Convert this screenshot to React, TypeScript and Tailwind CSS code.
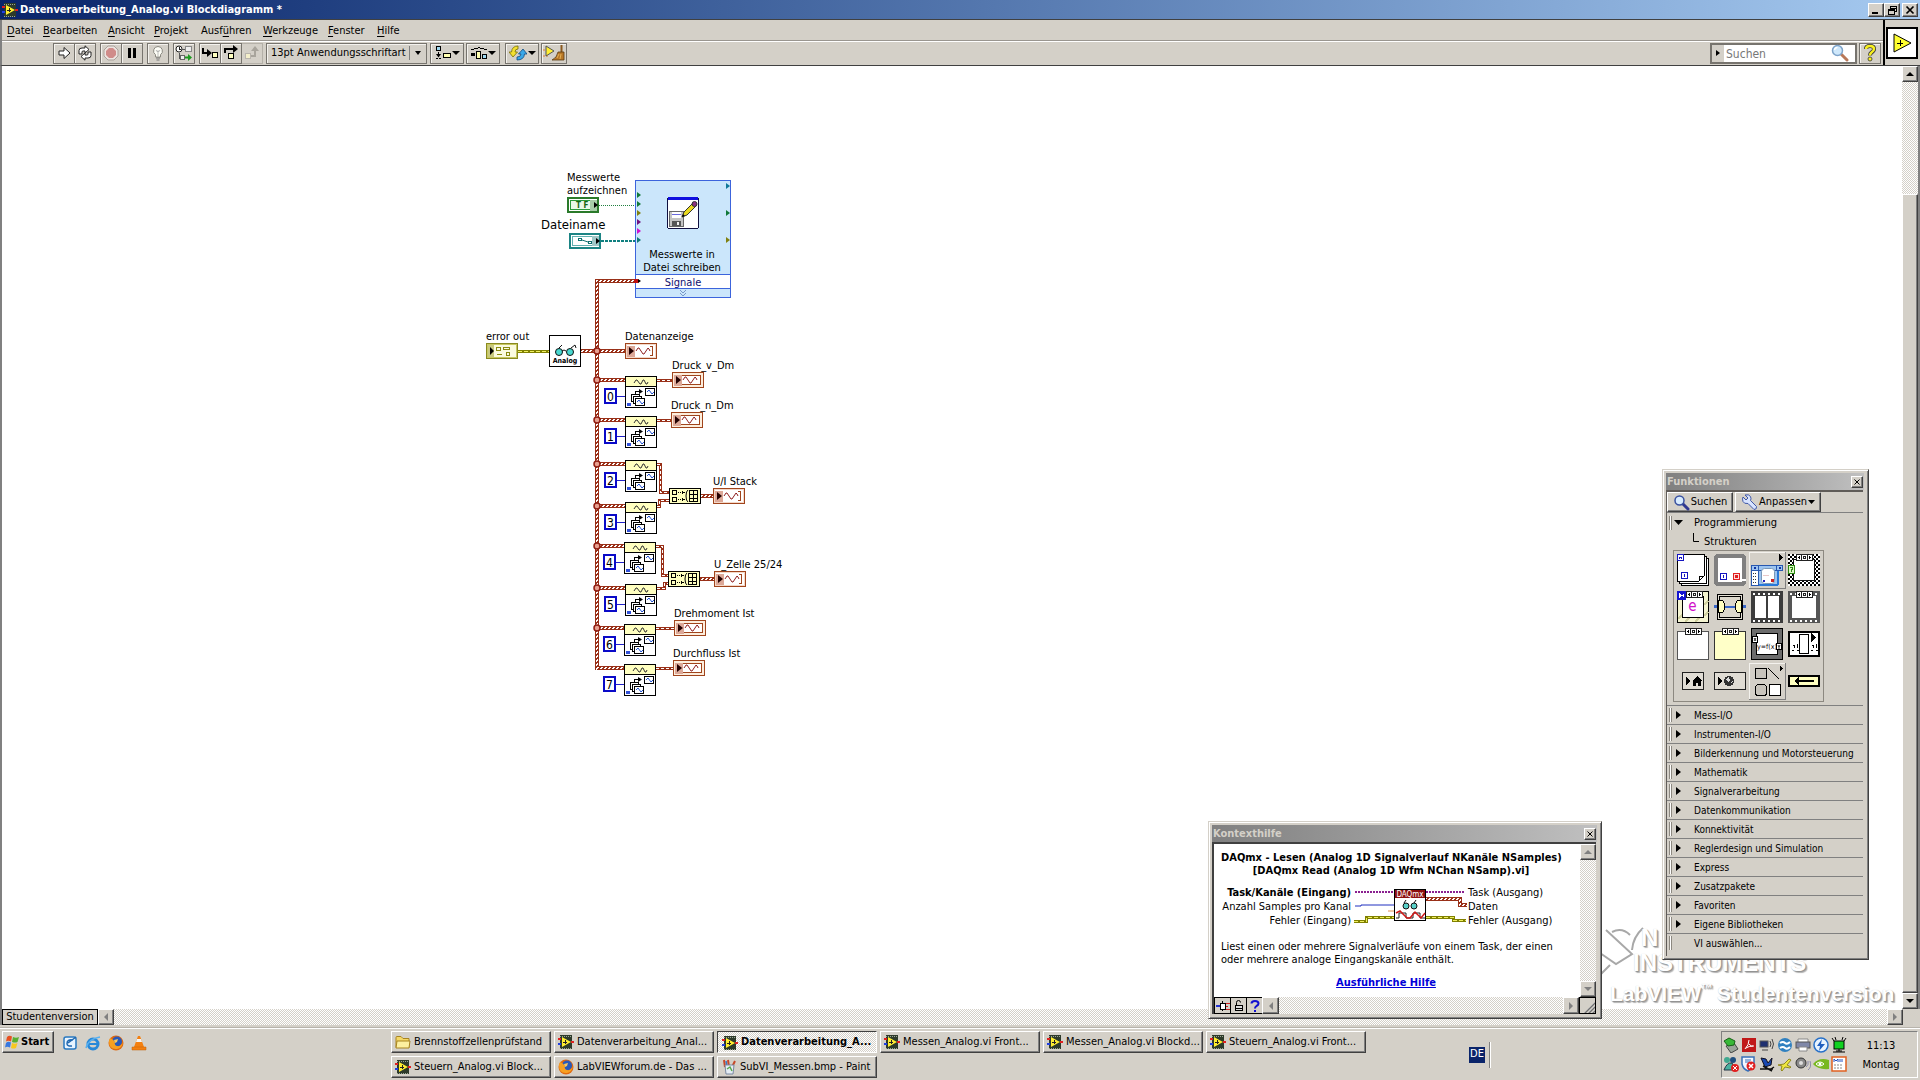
import React from "react";

type P = { children?: React.ReactNode; className?: string };

const RAISED =
  "border border-t-white border-l-white border-r-[#404040] border-b-[#404040] shadow-[inset_-1px_-1px_0_#808080] bg-[#d4d0c8]";
const DITHER =
  "bg-[repeating-conic-gradient(#ffffff_0_25%,#d4d0c8_0_50%)] bg-[length:2px_2px]";

/* ---------- small glyphs ---------- */

function ViIcon() {
  return (
    <svg width="16" height="16" viewBox="0 0 16 16" className="shrink-0" shapeRendering="crispEdges">
      <rect x="2" y="1" width="12" height="14" fill="#2d3a2a" />
      <path d="M2 2h12M2 14h12" stroke="#9aa694" strokeWidth="1" strokeDasharray="1 1" />
      <path d="M0 5h3" stroke="#e02020" strokeWidth="2" />
      <path d="M0 10h3" stroke="#2040e0" strokeWidth="2" />
      <path d="M13 8h3" stroke="#e02020" strokeWidth="2" />
      <path d="M4 3L13 8L4 13z" fill="#ffee30" shapeRendering="auto" />
      <path d="M5 8h4M7 6v4" stroke="#222" />
    </svg>
  );
}

function Arrow({ dir, color = "#000" }: { dir: "up" | "down" | "left" | "right"; color?: string }) {
  const d = {
    up: "M4 2l4 4H0z",
    down: "M0 2h8L4 6z",
    left: "M6 0v8L2 4z",
    right: "M2 0v8l4-4z",
  }[dir];
  return (
    <svg width="8" height="8" viewBox="0 0 8 8" className="shrink-0">
      <path d={d} fill={color} />
    </svg>
  );
}

function ScrollButton({ dir, color, className = "" }: { dir: "up" | "down" | "left" | "right"; color?: string; className?: string }) {
  return (
    <button aria-label={"Bildlauf " + dir} className={`flex items-center justify-center shrink-0 ${RAISED} ${className}`}>
      <Arrow dir={dir} color={color} />
    </button>
  );
}

function Magnifier() {
  return (
    <svg width="18" height="18" viewBox="0 0 18 18" className="shrink-0">
      <path d="M10.500 10.500L16 16" stroke="#b87858" strokeWidth="3" strokeLinecap="round" />
      <circle cx="6.500" cy="6.500" r="5" fill="#cfe8fb" stroke="#7da3c9" strokeWidth="1.500" />
      <path d="M3.500 6a3 3 0 0 1 3-2.500" stroke="#fff" strokeWidth="1.500" fill="none" />
    </svg>
  );
}

/* ---------- title bar, menu, toolbar ---------- */

function TitleBar() {
  const b = `flex h-3.5 items-center justify-center ${RAISED}`;
  return (
    <header className="flex h-5 shrink-0 items-center border-b border-[#404040] bg-gradient-to-r from-[#0a246a] to-[#a6caf0] pl-0.5 pr-0.5">
      <ViIcon />
      <h1 className="ml-0.5 flex-1 whitespace-nowrap font-bold leading-4 text-white">
        Datenverarbeitung_Analog.vi Blockdiagramm *
      </h1>
      <button aria-label="Minimieren" className={`${b} w-4`}>
        <svg width="10" height="10"><path d="M1 8h6" stroke="#000" strokeWidth="2" /></svg>
      </button>
      <button aria-label="Wiederherstellen" className={`${b} w-4`}>
        <svg width="10" height="10" shapeRendering="crispEdges">
          <path d="M3 1h6v2H3zM3 2v2M9 2v4H7" stroke="#000" fill="none" />
          <path d="M1 4h6v5H1zM1 5h6" stroke="#000" fill="none" />
        </svg>
      </button>
      <button aria-label="Schließen" className={`${b} ml-0.5 w-4`}>
        <svg width="10" height="10"><path d="M1.500 1.500l7 7M8.500 1.500l-7 7" stroke="#000" strokeWidth="1.700" /></svg>
      </button>
    </header>
  );
}

const MENUS: [string, string, string, string][] = [
  ["", "D", "atei", "w-9"],
  ["", "B", "earbeiten", "w-[65px]"],
  ["", "A", "nsicht", "w-[46px]"],
  ["", "P", "rojekt", "w-[47px]"],
  ["Ausf", "ü", "hren", "w-[62px]"],
  ["", "W", "erkzeuge", "w-[65px]"],
  ["", "F", "enster", "w-[49px]"],
  ["", "H", "ilfe", "w-8"],
];

function MenuBar() {
  return (
    <nav className="flex h-[21px] items-center border-b border-[#9a9690] pl-[5px] pt-0.5">
      {MENUS.map(([a, u, c, w]) => (
        <button key={u + c} className={`${w} whitespace-nowrap text-left leading-4`}>
          {a}
          <span className="underline underline-offset-2">{u}</span>
          {c}
        </button>
      ))}
    </nav>
  );
}

function Tool({ label, className = "", children }: P & { label: string }) {
  return (
    <button
      aria-label={label}
      className={`flex h-[21px] shrink-0 items-center justify-center border border-[#77746e] bg-[#d4d0c8] shadow-[inset_1px_1px_0_#f4f2ee] ${className}`}
    >
      {children}
    </button>
  );
}

function Toolbar() {
  return (
    <div className="flex h-[25px] items-center border-t border-white pl-[51px] pr-0.5">
      <Tool label="Ausführen" className="w-[22px]">
        <svg width="16" height="16"><path d="M3 6h5V2.500L14 8l-6 5.500V10H3z" fill="#fff" stroke="#222" /></svg>
      </Tool>
      <Tool label="Wiederholt ausführen" className="-ml-px w-[22px]">
        <svg width="16" height="16">
          <path d="M2 9V5.500q0-2.500 3-2.500h3V.800l4 3.700L8 8V6H6q-1 0-1 1v2z" fill="#fff" stroke="#222" />
          <path d="M14 7v3.500q0 2.500-3 2.500H8v2.200l-4-3.700L8 8v2h2q1 0 1-1V7z" fill="#fff" stroke="#222" />
        </svg>
      </Tool>
      <Tool label="Abbrechen" className="ml-1 w-[22px]">
        <svg width="16" height="16">
          <path d="M5 1h6l4 4v6l-4 4H5l-4-4V5z" fill="#ece4e0" stroke="#aaa29c" />
          <path d="M6 3h4l3 3v4l-3 3H6l-3-3V6z" fill="#d08c8a" />
        </svg>
      </Tool>
      <Tool label="Pause" className="-ml-px w-[22px]">
        <svg width="16" height="16"><path d="M4 3h3v10H4zM9 3h3v10H9z" /></svg>
      </Tool>
      <Tool label="Highlight-Funktion" className="ml-1 w-[22px]">
        <svg width="16" height="16">
          <path d="M8 1.500a4.500 4.500 0 0 0-2.500 8.200V12h5V9.700A4.500 4.500 0 0 0 8 1.500z" fill="#fdfdf6" stroke="#8a8880" />
          <path d="M6 5l1.500 2L8 5.500l.5 1.500L10 5M8 7v4" stroke="#aaa" fill="none" strokeWidth=".8" />
          <path d="M6 13h4M6.500 15h3" stroke="#777" />
        </svg>
      </Tool>
      <Tool label="Verbindungswerte beibehalten" className="ml-1 w-[22px]">
        <svg width="18" height="16" shapeRendering="crispEdges">
          <circle cx="4" cy="4" r="3" fill="#fff" stroke="#222" shapeRendering="auto" />
          <path d="M4 2v2h2" stroke="#222" fill="none" />
          <path d="M7 4h3M4 8v5h3" stroke="#555" fill="none" />
          <rect x="10" y="1" width="6" height="5" fill="#eee" stroke="#888" />
          <rect x="5" y="10" width="4" height="4" fill="#eee" stroke="#666" />
          <path d="M10 11.500h3V9l4 3.500-4 3.500v-2.500h-3z" fill="#1c9a20" shapeRendering="auto" />
        </svg>
      </Tool>
      <Tool label="Hineinspringen" className="ml-1 w-[22px]">
        <svg width="18" height="16" shapeRendering="crispEdges">
          <path d="M2 3v5h4" stroke="#000" strokeWidth="2" fill="none" />
          <path d="M6 4l5 4-5 4z" shapeRendering="auto" />
          <rect x="11.500" y="7.500" width="5" height="5" fill="#ffffc0" stroke="#000" />
        </svg>
      </Tool>
      <Tool label="Überspringen" className="-ml-px w-[22px]">
        <svg width="18" height="16" shapeRendering="crispEdges">
          <path d="M3 8V4h8" stroke="#000" strokeWidth="2" fill="none" />
          <path d="M11 0l5 4-5 4z" shapeRendering="auto" />
          <rect x="6.500" y="8.500" width="5" height="5" fill="#ffffc0" stroke="#000" />
        </svg>
      </Tool>
      <button aria-label="Herausspringen" className="flex h-[21px] w-[21px] shrink-0 items-center justify-center border-y border-r border-[#b4b0a8]">
        <svg width="18" height="16" shapeRendering="crispEdges">
          <path d="M8 11h4V6" stroke="#a8a49c" strokeWidth="2" fill="none" />
          <path d="M8 6l4-5 4 5z" fill="#a8a49c" shapeRendering="auto" />
          <rect x="2.500" y="8.500" width="5" height="5" fill="#f4efcb" stroke="#b8b4ac" />
        </svg>
      </button>
      <label className="relative ml-[3px] flex h-[21px] w-[161px] shrink-0 items-center border border-[#77746e] shadow-[inset_1px_1px_0_#f4f2ee]">
        <select aria-label="Schriftart" className="h-full w-full appearance-none bg-transparent pl-1 outline-none">
          <option>13pt Anwendungsschriftart</option>
        </select>
        <span className="pointer-events-none absolute right-0 flex h-3.5 w-[17px] items-center justify-center border-l border-[#808080]">
          <svg width="8" height="8"><path d="M1 2h6L4 6z" /></svg>
        </span>
      </label>
      <Tool label="Objekte ausrichten" className="ml-[3px] w-[34px]">
        <svg width="18" height="16" shapeRendering="crispEdges">
          <rect x="2.500" y="1.500" width="4" height="4" fill="#9fd8f0" stroke="#000" />
          <path d="M4.500 7v3M2 13.500h6" stroke="#000" strokeDasharray="2 1" />
          <path d="M2 9h5l-2.500 3.500z" shapeRendering="auto" />
          <rect x="9.500" y="8.500" width="7" height="4" fill="#ffffb0" stroke="#000" />
        </svg>
        <Arrow dir="down" />
      </Tool>
      <Tool label="Objekte einteilen" className="ml-0.5 w-[34px]">
        <svg width="18" height="16" shapeRendering="crispEdges">
          <path d="M1 4.500h3M4 3.500h4M8 2.500h2M10 3.500h4M14 4.500h3" stroke="#000" />
          <path d="M1 8h4v3H1z" />
          <rect x="6.500" y="6.500" width="4" height="7" fill="#ffffb0" stroke="#000" />
          <rect x="12.500" y="9.500" width="4" height="4" fill="#9fd8f0" stroke="#000" />
        </svg>
        <Arrow dir="down" />
      </Tool>
      <Tool label="Neu ordnen" className="ml-[5px] w-[34px] gap-px">
        <svg width="18" height="16">
          <path d="M9 1Q3 1 2.500 7H0l4 5 4.500-5H6Q6 4 9 4z" fill="#f4e030" stroke="#7a7000" strokeWidth=".8" />
          <path d="M8 15q7 0 7.500-6H18l-4-5-4.500 5H12q0 3-4 3z" fill="#3aa8e8" stroke="#104a80" strokeWidth=".8" />
        </svg>
        <Arrow dir="down" />
      </Tool>
      <Tool label="Diagramm aufräumen" className="ml-0.5 w-[26px]">
        <svg width="22" height="16" className="shrink-0">
          <path d="M0 5h5M0 11h5" stroke="#e08030" strokeDasharray="2 1" />
          <path d="M3 1l8 5-8 5z" fill="#ffee30" stroke="#555" />
          <path d="M18.500 0v8" stroke="#8a5a20" strokeWidth="2" />
          <path d="M15 7h6v8H9q5-2 6-8z" fill="#b87828" stroke="#5a3a10" strokeWidth=".8" />
          <path d="M14 13l2-4M17 14l1-5" stroke="#f0c060" strokeWidth=".8" />
        </svg>
      </Tool>
      <div className="flex-1" />
      <div className="flex h-[21px] w-[147px] items-center border-2 border-[#77746e]">
        <button aria-label="Suchleiste einklappen" className="flex h-full w-3 items-center justify-center bg-[#d4d0c8]">
          <svg width="6" height="8"><path d="M1 1v6l4-3z" /></svg>
        </button>
        <input
          aria-label="Suchen"
          placeholder="Suchen"
          className="h-full min-w-0 flex-1 bg-white pl-0.5 pt-0.5 text-[12px] outline-none placeholder:text-[#777]"
        />
        <span className="flex h-full w-6 items-center bg-white"><Magnifier /></span>
      </div>
      <Tool label="Kontexthilfe anzeigen" className="ml-0.5 w-[22px] bg-[#a8a49c]">
        <svg width="14" height="18">
          <path d="M3 5q0-3 4-3t4 3q0 2-2.500 3.500Q7 9.500 7 11.500" stroke="#333" strokeWidth="4" fill="none" />
          <path d="M3 5q0-3 4-3t4 3q0 2-2.500 3.500Q7 9.500 7 11.500" stroke="#f8f020" strokeWidth="2.500" fill="none" />
          <circle cx="7" cy="15" r="2" fill="#f8f020" stroke="#333" strokeWidth=".8" />
        </svg>
      </Tool>
    </div>
  );
}

/* ---------- block diagram ---------- */

const WIRE = "#993018";

function WeavePattern({ id }: { id: string }) {
  return (
    <defs>
      <pattern id={id} width="4" height="4" patternUnits="userSpaceOnUse">
        <rect width="4" height="4" fill={WIRE} />
        <path d="M0 0h2v1H0zM3 1h2v1H3zM0 1h1v1H0zM2 2h2v1H2zM1 3h2v1H1z" fill="#fff" />
      </pattern>
    </defs>
  );
}

function Wire({ d, thin, weave = "weave" }: { d: string; thin?: boolean; weave?: string }) {
  return thin ? (
    <g fill="none" shapeRendering="crispEdges">
      <path d={d} stroke={WIRE} strokeWidth="3" />
      <path d={d} stroke="#fff" strokeWidth="1" strokeDasharray="3 2" />
    </g>
  ) : (
    <g fill="none" shapeRendering="crispEdges">
      <path d={d} stroke={WIRE} strokeWidth="4" />
      <path d={d} stroke={`url(#${weave})`} strokeWidth="2" />
    </g>
  );
}

function Indicator({ x, y, array }: { x: number; y: number; array?: boolean }) {
  return (
    <g transform={`translate(${x} ${y})`} shapeRendering="crispEdges">
      <rect x="0.500" y="0.500" width="31" height="15" fill={array ? "#fff" : "#fdeedd"} stroke="#a0441c" />
      {array && <rect x="1.500" y="1.500" width="29" height="13" fill="none" stroke="#f4d8c8" />}
      {!array && <rect x="3.500" y="3.500" width="25" height="9" fill="#fff" stroke="#a0441c" />}
      <rect x="2" y="3" width="8" height="11" fill="#dca898" />
      <path d="M4 4l5 4-5 4z" fill="#200" shapeRendering="auto" />
      <path d="M11 8l2-3h1l4 6h1l4-6 1 1 1 2" fill="none" stroke="#902020" shapeRendering="auto" />
      {array && <path d="M25 3.500h2.500v9H25" fill="none" stroke="#a0441c" />}
    </g>
  );
}

function IndexArray({ x, y }: { x: number; y: number }) {
  return (
    <g transform={`translate(${x} ${y})`} shapeRendering="crispEdges">
      <rect x="0.500" y="0.500" width="31" height="31" fill="#fff" stroke="#000" />
      <rect x="1" y="1" width="30" height="9" fill="#ffffc0" />
      <path d="M0 10.500h32" stroke="#000" />
      <path d="M9 7l2-3h1l3 4h1l2-4h1l2 4h1l1-2" fill="none" stroke="#333" shapeRendering="auto" />
      <rect x="20.500" y="12.500" width="9" height="7" fill="#fff" stroke="#000" />
      <path d="M22 16l2-2 3 4 2-2" fill="none" stroke="#2050d0" shapeRendering="auto" />
      <path d="M10.500 18v-2.500H15" stroke="#000" fill="none" />
      <path d="M14 13l4 2.500-4 2.500z" shapeRendering="auto" />
      <rect x="6.500" y="18.500" width="8" height="7" fill="#fff" stroke="#000" />
      <rect x="8.500" y="20.500" width="8" height="7" fill="#fff" stroke="#000" />
      <rect x="10.500" y="22.500" width="9" height="7" fill="#fff" stroke="#000" />
      <path d="M12 26l2-2 3 4 2-2" fill="none" stroke="#2050d0" shapeRendering="auto" />
      <rect x="2" y="27" width="4" height="3" fill="#3050d8" />
    </g>
  );
}

function Constant({ x, y, n }: { x: number; y: number; n: number }) {
  return (
    <g transform={`translate(${x} ${y})`}>
      <rect x="1" y="1" width="11" height="14" fill="#fff" stroke="#0a0ac8" strokeWidth="2" />
      <text x="6.500" y="13" fontSize="12" textAnchor="middle">{n}</text>
      <path d="M13 8.500h8" stroke="#2020c8" />
    </g>
  );
}

function BuildArray({ x, y }: { x: number; y: number }) {
  return (
    <g transform={`translate(${x} ${y})`} shapeRendering="crispEdges">
      <rect x="0.500" y="0.500" width="31" height="15" fill="#ffffc0" stroke="#000" />
      <path d="M3.500 2.500h4v4h-4zM3.500 9.500h4v4h-4z" fill="none" stroke="#000" />
      <path d="M9 4.500h5M9 11.500h5" stroke="#000" strokeDasharray="1 1" />
      <path d="M13 3l3 1.500-3 1.500zM13 10l3 1.500-3 1.500z" />
      <path d="M19 2q-2 1-2 6t2 6" fill="none" stroke="#000" shapeRendering="auto" />
      <path d="M20.500 2.500h8v11h-8zM24.500 2v12M20 6.500h8M20 10.500h8" fill="none" stroke="#000" />
    </g>
  );
}

function Glasses({ x, y }: { x: number; y: number }) {
  return (
    <g transform={`translate(${x} ${y})`}>
      <circle cx="4" cy="7" r="3.500" fill="#48d8d0" stroke="#111" />
      <circle cx="15" cy="7" r="3.500" fill="#48d8d0" stroke="#111" />
      <path d="M7 6q2-2 4 0M4 3l3-3M16 3l4-3 1 3" fill="none" stroke="#111" />
    </g>
  );
}

const BLOCKS = [
  { x: 625, y: 376 },
  { x: 625, y: 416 },
  { x: 625, y: 460 },
  { x: 625, y: 502 },
  { x: 624, y: 542 },
  { x: 625, y: 584 },
  { x: 624, y: 624 },
  { x: 624, y: 664 },
];

const TERMS: [number, number, string][] = [
  [637, 195, "#107838"],
  [637, 204, "#107838"],
  [637, 213, "#808010"],
  [637, 222, "#701080"],
  [637, 231, "#d010d0"],
  [637, 240, "#107878"],
  [726, 186, "#107898"],
  [726, 213, "#107838"],
  [726, 240, "#808010"],
];

function DiagramDrawing() {
  return (
    <svg
      width="320"
      height="560"
      viewBox="480 160 320 560"
      className="absolute left-[478px] top-[94px] font-['DejaVu_Sans_Condensed','Noto_Sans',sans-serif]"
      aria-label="Blockdiagramm"
    >
      <WeavePattern id="weave" />
      <Wire d="M637 281H597V670" />
      <Wire d="M581 351H625" />
      {BLOCKS.map((b) => (
        <Wire key={b.y} d={`M597 ${b.y + 4}H${b.x}`} />
      ))}
      {[351, 380, 420, 464, 506, 546, 588, 628].map((y) => (
        <circle key={y} cx="597" cy={y} r="3" fill="#e8a090" stroke="#901c10" strokeWidth="1.500" />
      ))}
      <Wire thin d="M657 380.500H672" />
      <Wire thin d="M657 420.500H671" />
      <Wire thin d="M657 464.500H660.500V492.500H669" />
      <Wire thin d="M657 506.500H659.500V500.500H669" />
      <Wire thin d="M656 546.500H662.500V575.500H668" />
      <Wire thin d="M657 588.500H664.500V583.500H668" />
      <Wire d="M701 496H713" />
      <Wire d="M700 579H714" />
      <Wire thin d="M656 628.500H674" />
      <Wire thin d="M656 668.500H673" />
      {BLOCKS.map((b, i) => (
        <g key={b.y}>
          <IndexArray x={b.x} y={b.y} />
          <Constant x={b.x - 21} y={b.y + 12} n={i} />
        </g>
      ))}
      <BuildArray x={669} y={488} />
      <BuildArray x={668} y={571} />
      <Indicator x={625} y={343} array />
      <Indicator x={672} y={372} />
      <Indicator x={671} y={412} />
      <Indicator x={713} y={488} array />
      <Indicator x={714} y={571} array />
      <Indicator x={674} y={620} />
      <Indicator x={673} y={660} />

      {/* error cluster */}
      <g shapeRendering="crispEdges">
        <path d="M518 351.500h31" stroke="#808000" strokeWidth="3" />
        <path d="M518 351.500h31" stroke="#f0f060" strokeWidth="1" strokeDasharray="4 2" />
        <rect x="486.500" y="343.500" width="31" height="15" fill="#fbfbe0" stroke="#8a8a20" />
        <rect x="487.500" y="344.500" width="29" height="13" fill="none" stroke="#c8c860" />
        <rect x="488" y="345" width="6" height="12" fill="#c8c880" />
        <path d="M490 347l4 4-4 4z" fill="#000" shapeRendering="auto" />
        <path d="M496.500 347.500h4v3h-4zM503.500 347.500h6v2h-6zM496.500 354.500h5M506.500 352.500h3v3h-3z" fill="none" stroke="#8a8a10" />
      </g>

      {/* Analog subVI */}
      <rect x="549.500" y="335.500" width="31" height="31" fill="#fff" stroke="#000" />
      <Glasses x={555} y={345} />
      <text x="565" y="363" fontSize="7" fontWeight="bold" textAnchor="middle">Analog</text>

      {/* Boolean control */}
      <g shapeRendering="crispEdges">
        <path d="M599 205.500h37" stroke="#208040" strokeDasharray="1 1" />
        <rect x="568" y="198" width="30" height="14" fill="#fff" stroke="#2a7a2a" strokeWidth="2" />
        <rect x="570.500" y="200.500" width="25" height="9" fill="#e8f8e8" stroke="#2a9a3a" />
        <rect x="590" y="200" width="7" height="11" fill="#a8cca8" />
        <path d="M594 202l4 3-4 3z" shapeRendering="auto" />
      </g>
      <text x="576" y="208" fontSize="8" fontWeight="bold" fill="#146414">T F</text>

      {/* path control */}
      <g shapeRendering="crispEdges">
        <path d="M601 241h36" stroke="#108080" strokeWidth="2" strokeDasharray="3 1" />
        <rect x="570" y="234" width="30" height="14" fill="#fff" stroke="#1c8484" strokeWidth="2" />
        <rect x="572.500" y="236.500" width="25" height="9" fill="none" stroke="#60b0b0" />
        <rect x="592" y="236" width="7" height="10" fill="#a0c8c8" />
        <path d="M596 238l4 3-4 3z" shapeRendering="auto" />
        <path d="M578 238.500h3v2h-3zM588 241.500h3v2h-3z" fill="none" stroke="#107070" />
        <path d="M582 240l6 2" stroke="#107070" shapeRendering="auto" />
      </g>

      {/* Express VI */}
      <g shapeRendering="crispEdges">
        <rect x="635.500" y="180.500" width="95" height="117" fill="#cbe6fb" stroke="#3c64dc" />
        <rect x="636" y="275" width="94" height="13" fill="#fff" />
        <path d="M635 274.500h96M635 288.500h96" stroke="#3c64dc" />
        <rect x="667.500" y="197.500" width="31" height="31" rx="2" fill="#fff" stroke="#101040" />
        <path d="M668 198.500h30" stroke="#1010e0" strokeWidth="3" />
        <rect x="669.500" y="211.500" width="14" height="15" fill="#c4c4c4" stroke="#666" />
        <rect x="672" y="212" width="9" height="6" fill="#fff" />
        <path d="M672 214.500h9" stroke="#6a6ae0" />
        <rect x="672" y="221" width="9" height="5" fill="#555" />
        <rect x="677" y="222" width="2" height="3" fill="#eee" />
      </g>
      <path d="M682 217l2-5L694 202l3 3-10 10z" fill="#e8d820" stroke="#333" />
      <path d="M682 217l1-3 2 2z" />
      <circle cx="694.500" cy="204" r="2.500" fill="#8a3080" stroke="#333" />
      {TERMS.map(([x, y, c], i) => (
        <path key={i} d={`M${x} ${y - 3}l4 3-4 3z`} fill={c} />
      ))}
      <path d="M634 279h4l2 2-2 2h-4z" fill="#c01010" />
      <path d="M638 279l3 2-3 2z" />
      <path d="M680 290l3 3 3-3M680 293l3 3 3-3" fill="none" stroke="#7898c8" />
    </svg>
  );
}

function CanvasLabel({ className = "", children }: P) {
  return <div className={`absolute whitespace-nowrap leading-[13px] ${className}`}>{children}</div>;
}

function Watermark() {
  const t = "whitespace-nowrap font-bold text-white font-['Liberation_Sans',sans-serif] [text-shadow:1px_1px_1px_#909090,2px_2px_1px_#b8b8b8,0_0_1px_#d0d0d0]";
  return (
    <div className="absolute bottom-0 right-0 h-24 w-[312px]" aria-hidden="true">
      <svg width="50" height="70" viewBox="0 0 50 70" className="absolute left-1 top-3" fill="none" stroke="#a8a8a8" strokeWidth="2">
        <path d="M12 5L38 29 22 39 6 28M18 7Q28 2 36 10M49 3Q39 12 38 25M2 54l14-14" />
      </svg>
      <div className={`absolute left-[51px] top-[13px] text-[24px] leading-6 ${t}`}>N</div>
      <div className={`absolute left-[43px] top-[38px] text-[24px] leading-6 ${t}`}>INSTRUMENTS</div>
      <div className={`absolute left-5 top-[67px] flex text-[21px] leading-7 ${t}`}>
        <span>LabVIEW</span>
        <span className="mr-1 text-[12px] leading-4">™</span>
        <span>Studentenversion</span>
      </div>
    </div>
  );
}

function Canvas() {
  return (
    <main className="relative min-w-0 flex-1 overflow-hidden bg-white">
      <Watermark />
      <DiagramDrawing />
      <CanvasLabel className="left-[565px] top-[105px]">Messwerte<br />aufzeichnen</CanvasLabel>
      <CanvasLabel className="left-[539px] top-[152px] text-[13px]">Dateiname</CanvasLabel>
      <CanvasLabel className="left-[632px] top-[182px] w-24 text-center">Messwerte in<br />Datei schreiben</CanvasLabel>
      <CanvasLabel className="left-[633px] top-[210px] w-24 text-center text-[#101070]">Signale</CanvasLabel>
      <CanvasLabel className="left-[484px] top-[264px]">error out</CanvasLabel>
      <CanvasLabel className="left-[623px] top-[264px]">Datenanzeige</CanvasLabel>
      <CanvasLabel className="left-[670px] top-[293px]">Druck_v_Dm</CanvasLabel>
      <CanvasLabel className="left-[669px] top-[333px]">Druck_n_Dm</CanvasLabel>
      <CanvasLabel className="left-[711px] top-[409px]">U/I Stack</CanvasLabel>
      <CanvasLabel className="left-[712px] top-[492px]">U_Zelle 25/24</CanvasLabel>
      <CanvasLabel className="left-[672px] top-[541px]">Drehmoment Ist</CanvasLabel>
      <CanvasLabel className="left-[671px] top-[581px]">Durchfluss Ist</CanvasLabel>
    </main>
  );
}

/* ---------- floating palettes ---------- */

function Palette({ title, className = "", children }: P & { title: string }) {
  return (
    <section
      aria-label={title}
      className={`absolute border border-[#d4d0c8] border-b-[#404040] border-r-[#404040] bg-[#d4d0c8] p-[3px] shadow-[inset_1px_1px_0_#fff,inset_-1px_-1px_0_#808080] ${className}`}
    >
      <div className="mr-px flex h-[17px] items-center justify-between bg-gradient-to-r from-[#808080] to-[#c0c0c0] pl-px pr-px">
        <h2 className="font-bold leading-4 text-[#d4d0c8]">{title}</h2>
        <button aria-label="Schließen" className={`flex h-3 w-3 items-center justify-center ${RAISED}`}>
          <svg width="8" height="8" className="shrink-0"><path d="M1.500 1.500l5 5M6.500 1.500l-5 5" stroke="#000" /></svg>
        </button>
      </div>
      {children}
    </section>
  );
}

function CaseTag({ x = 8 }: { x?: number }) {
  return (
    <g transform={`translate(${x} 0)`}>
      <rect x=".5" y=".5" width="16" height="6" fill="#fff" stroke="#222" />
      <path d="M5.500 0v7M11.500 0v7" stroke="#222" />
      <path d="M4 2v3L2 3.500zM13 2v3l2-1.500z" fill="#000" />
      <rect x="7.500" y="2.500" width="2" height="2" fill="none" stroke="#222" />
    </g>
  );
}

const FUNCTION_ICONS: [string, React.ReactNode][] = [
  ["FOR-Schleife", <>
    <rect x="4.500" y="4.500" width="27" height="27" fill="#fff" stroke="#000" />
    <rect x="2.500" y="2.500" width="27" height="27" fill="#fff" stroke="#000" />
    <path d="M.5.500h27v21l-6 6H.5z" fill="#fff" stroke="#000" />
    <path d="M27 22l-5 5v-5z" fill="#fff" stroke="#000" />
    <rect x=".5" y=".5" width="6" height="6" fill="#fff" stroke="#1414c0" />
    <path d="M2.500 5V3h2v2" fill="none" stroke="#1414c0" />
    <rect x="4.500" y="18.500" width="6" height="6" fill="#fff" stroke="#1414c0" />
    <path d="M7.500 20v3" stroke="#1414c0" />
  </>],
  ["WHILE-Schleife", <>
    <rect x="2" y="2" width="28" height="28" rx="2" fill="#fff" stroke="#808080" strokeWidth="4" />
    <rect x="6.500" y="19.500" width="6" height="6" fill="#fff" stroke="#1414c0" />
    <path d="M9.500 21v3" stroke="#1414c0" />
    <rect x="19.500" y="19.500" width="6" height="6" fill="#fdd" stroke="#e02020" />
    <rect x="21" y="21" width="3" height="3" fill="#e02020" />
    <path d="M27 26h5" stroke="#fff" strokeWidth="2" />
  </>],
  ["Zeitschleifen", <>
    <rect x=".5" y="11.500" width="31" height="5" fill="#9cc4f0" stroke="#2858b0" />
    <path d="M7.500 11v6M25.500 11v6" stroke="#2858b0" />
    <rect x="3" y="13" width="2" height="2" fill="#1030a0" />
    <rect x="28" y="13" width="2" height="2" fill="#1030a0" />
    <rect x=".5" y="16.500" width="7" height="15" fill="#fff" stroke="#2858b0" />
    <path d="M2 19.500h4M2 22.500h4M2 25.500h4M2 28.500h4" stroke="#333" strokeDasharray="1 1" />
    <rect x="8" y="17" width="18" height="14" fill="#9cc4f0" />
    <rect x="10.500" y="14.500" width="13" height="15" rx="3" fill="#fff" stroke="#7898b8" shapeRendering="auto" />
    <path d="M26.500 17v14M8 31h19" stroke="#2878d8" strokeWidth="2" />
    <rect x="12" y="26" width="2" height="2" fill="#2020c0" />
    <rect x="20" y="25" width="3" height="3" fill="#d02020" />
    <path d="M12 21h6" stroke="#e8c8c8" />
    <path d="M28 0v7l4-3.500z" />
  </>],
  ["Case-Struktur", <>
    <defs>
      <pattern id="checker" width="4" height="4" patternUnits="userSpaceOnUse">
        <rect width="4" height="4" fill="#fff" />
        <path d="M0 0h2v2H0zM2 2h2v2H2z" />
      </pattern>
    </defs>
    <rect width="32" height="32" fill="url(#checker)" />
    <rect x="5.500" y="5.500" width="21" height="21" fill="#fff" stroke="#111" />
    <CaseTag />
    <rect x=".5" y="11.500" width="6" height="8" fill="#dff5c8" stroke="#2a8a10" />
    <path d="M2 13.500h2.500v2H3.500v2.500" stroke="#2a8a10" fill="none" />
  </>],
  ["Ereignisstruktur", <>
    <rect x="0.500" y=".5" width="31" height="31" fill="#f4f4d0" stroke="#000" />
    <path d="M1 28l4-4M8 31l4-4M18 31l4-4M27 25l4-4M27 14l4-4" stroke="#d0d0a0" strokeWidth="2" />
    <rect x="5.500" y="5.500" width="21" height="21" fill="#fff" stroke="#000" />
    <CaseTag x={9} />
    <rect x="1" y="1" width="7" height="7" fill="#fff" stroke="#1414d0" strokeWidth="2" />
    <path d="M2 2h5L2 7h5z" fill="#1414d0" />
    <text x="15.500" y="20" fontSize="15" textAnchor="middle" fill="#d010c8">e</text>
  </>],
  ["In-Place-Element-Struktur", <>
    <path d="M0 15.500h32" stroke="#3868c8" strokeWidth="3" />
    <rect x="3.500" y="3.500" width="25" height="25" fill="#e4e0d4" stroke="#000" />
    <rect x="5.500" y="5.500" width="21" height="21" fill="#dcd8cc" stroke="#000" />
    <path d="M6 15.500h20" stroke="#3868c8" strokeWidth="2" />
    <path d="M4.500 9.500h4l2 3v6l-2 3h-4zM27.500 9.500h-4l-2 3v6l2 3h4z" fill="#ffffc0" stroke="#000" />
  </>],
  ["Flache Sequenzstruktur", <>
    <rect width="32" height="32" fill="#3c3c3c" />
    <path d="M2 2.500h28M2 29.500h28" stroke="#fff" strokeWidth="2" strokeDasharray="2 3" />
    <rect x="4" y="5" width="11" height="22" fill="#fff" />
    <rect x="17" y="5" width="11" height="22" fill="#fff" />
  </>],
  ["Gestapelte Sequenzstruktur", <>
    <rect width="32" height="32" fill="#555" />
    <path d="M2 2.500h28M2 29.500h28" stroke="#fff" strokeWidth="2" strokeDasharray="2 3" />
    <rect x="4" y="5" width="24" height="22" fill="#fff" />
    <CaseTag />
  </>],
  ["Diagrammdeaktivierungsstruktur", <>
    <rect x=".5" y="3.500" width="31" height="28" fill="#fff" stroke="#555" />
    <CaseTag />
  </>],
  ["Struktur zur bedingten Deaktivierung", <>
    <rect x=".5" y="3.500" width="31" height="28" fill="#ffffc8" stroke="#333" />
    <CaseTag />
  </>],
  ["Formelknoten", <>
    <rect x=".5" y=".5" width="31" height="31" fill="#6c6c6c" stroke="#000" />
    <rect x="5.500" y="5.500" width="21" height="21" fill="#fff" stroke="#000" />
    <rect x="1.500" y="8.500" width="5" height="6" fill="#fff" stroke="#000" />
    <path d="M3 10l2 3M5 10l-2 3" stroke="#000" strokeWidth=".8" shapeRendering="auto" />
    <rect x="25.500" y="15.500" width="5" height="6" fill="#fff" stroke="#000" />
    <path d="M27 17l1 2 1-2M28 19v2" stroke="#000" strokeWidth=".8" fill="none" shapeRendering="auto" />
    <text x="16" y="21" fontSize="7" textAnchor="middle">y=f(x)</text>
  </>],
  ["Umgebungsvariable", <>
    <rect x="1" y="4" width="30" height="24" fill="#fff" stroke="#000" strokeWidth="2" />
    <rect x="11.500" y="6.500" width="9" height="19" fill="#fff" stroke="#000" />
    <path d="M23 5v9l5-4.500z" />
    <path d="M4.500 17h2v2h-1M9.500 16v4M23.500 17h2v2h-1M28.500 16v4M4 22.500h2M9 22.500h2M23 22.500h2M28 22.500h2" stroke="#000" fill="none" />
  </>],
  ["Lokale Variable", <>
    <rect x="5.500" y="7.500" width="21" height="17" fill="#e0dcd4" stroke="#222" />
    <path d="M9 12v8l4-4z" />
    <path d="M20 11l5 5h-1v5h-3v-3h-2v3h-3v-5h-1z" />
  </>],
  ["Globale Variable", <>
    <rect x=".5" y="7.500" width="31" height="17" fill="#e0dcd4" stroke="#222" />
    <path d="M4 12v8l4-4z" />
    <circle cx="15" cy="16" r="5" fill="#333" />
    <path d="M12 14l3-2 1 3-2 2zM17 17l2-1-1 3z" fill="#ddd" />
  </>],
  ["Dekorationen", <>
    <rect x="4.500" y="3.500" width="11" height="10" fill="#c8c4bc" stroke="#000" />
    <path d="M17 3l11 11" stroke="#000" />
    <path d="M29 0v7l3-3.500z" />
    <rect x="4.500" y="19.500" width="11" height="11" rx="3" fill="#c8c4bc" stroke="#000" />
    <rect x="18.500" y="19.500" width="11" height="11" fill="#fff" stroke="#000" />
  </>],
  ["Rückkopplungsknoten", <>
    <rect x="1" y="11" width="30" height="10" fill="#ffffc0" stroke="#000" strokeWidth="2" />
    <path d="M8 16h18" stroke="#000" strokeWidth="2" />
    <path d="M6 16l5-4v8z" />
  </>],
];

const CATEGORIES = [
  "Mess-I/O",
  "Instrumenten-I/O",
  "Bilderkennung und Motorsteuerung",
  "Mathematik",
  "Signalverarbeitung",
  "Datenkommunikation",
  "Konnektivität",
  "Reglerdesign und Simulation",
  "Express",
  "Zusatzpakete",
  "Favoriten",
  "Eigene Bibliotheken",
];

function Grip() {
  return <span className="ml-0.5 h-3.5 w-[3px] shrink-0 border-x border-[#8c8880] bg-white" />;
}

function FunctionsPalette() {
  return (
    <Palette title="Funktionen" className="right-[51px] top-[469px] w-[207px]">
      <div className="mr-0.5 border-l border-t-2 border-[#605c58] pb-1">
        <div className="flex h-[21px] items-center gap-0.5 border-b border-[#808080]">
          <button className={`flex h-5 w-[66px] items-center justify-center gap-px ${RAISED}`}>
            <svg width="17" height="17" className="shrink-0">
              <path d="M10 10l5 5" stroke="#303890" strokeWidth="3" strokeLinecap="round" />
              <circle cx="6.500" cy="6.500" r="4.500" fill="#d8ecff" stroke="#3850a0" strokeWidth="1.500" />
            </svg>
            Suchen
          </button>
          <button className={`flex h-5 w-[86px] items-center justify-center gap-px whitespace-nowrap ${RAISED}`}>
            <svg width="17" height="17" className="shrink-0">
              <path d="M2 3l3 3 2-2-3-3q4-1 5.500 1.500Q10.500 5 9.500 6.500l6 6q.5 3-2.500 3l-6-6Q3 10 2 7.500 1 5 2 3z" fill="#d8e4ff" stroke="#4058a8" />
            </svg>
            Anpassen
            <svg width="7" height="8" className="shrink-0"><path d="M0 2h7L3.500 6z" /></svg>
          </button>
        </div>
        <button className="flex h-5 w-full items-center">
          <Grip />
          <svg width="10" height="8" className="ml-0.5 shrink-0"><path d="M0 1h9L4.500 6z" /></svg>
          <span className="ml-2.5">Programmierung</span>
        </button>
        <div className="flex h-[17px] items-center pl-[26px]">
          <svg width="7" height="12" className="mb-1.5"><path d="M.5 0v8.500H6" stroke="#000" fill="none" /></svg>
          <span className="ml-1 leading-[15px]">Strukturen</span>
        </div>
        <div className="mb-[3px] ml-1.5 grid w-[151px] grid-cols-4 gap-[5px] border border-[#8c8880] p-[3px] pb-1">
          {FUNCTION_ICONS.map(([label, art], i) => (
            <button key={label} aria-label={label} className="h-8 w-8">
              <svg width="32" height="32" overflow="visible" shapeRendering="crispEdges">
                {(i === 2 || i === 14) && (
                  <>
                    <path d="M-1.500 34V-1.500H34" fill="none" stroke="#f4f2ee" />
                    <path d="M34.500-2V34.500H-2" fill="none" stroke="#808080" />
                  </>
                )}
                {art}
              </svg>
            </button>
          ))}
        </div>
        <ul>
          {CATEGORIES.map((c) => (
            <li key={c} className="border-t border-[#808080]">
              <button className="flex h-[18px] w-full items-center">
                <Grip />
                <svg width="6" height="10" className="ml-1 shrink-0"><path d="M0 1v8l5-4z" /></svg>
                <span className="ml-3 whitespace-nowrap text-[10px]">{c}</span>
              </button>
            </li>
          ))}
          <li className="border-t border-[#808080]">
            <button className="flex h-[18px] w-full items-center">
              <Grip />
              <span className="ml-[22px] text-[10px]">VI auswählen...</span>
            </button>
          </li>
        </ul>
      </div>
    </Palette>
  );
}

function HelpDrawing() {
  return (
    <svg width="114" height="40" viewBox="1354 888 114 40" className="shrink-0">
      <WeavePattern id="weave-help" />
      <path d="M1355 893h39M1426 893h39" stroke="#8a2090" strokeWidth="2" strokeDasharray="2 1" />
      <path d="M1355 907h6v-1h33" stroke="#2030c0" fill="none" />
      <path d="M1388 912h6" stroke="#e09050" />
      <g shapeRendering="crispEdges" fill="none">
        <path d="M1354 922.500h12.500v-4H1394M1426 918.500h27.500v3H1466" stroke="#808000" strokeWidth="3" />
        <path d="M1354 922.500h12.500v-4H1394M1426 918.500h27.500v3H1466" stroke="#f0f060" strokeDasharray="4 2" />
      </g>
      <Wire weave="weave-help" d="M1426 900h34v6h7" />
      <rect x="1394.500" y="890.500" width="31" height="31" fill="#fff" stroke="#000" />
      <rect x="1395" y="891" width="30" height="8" fill="#8c1010" />
      <text x="1410" y="898" fontSize="8" textAnchor="middle" fill="#fff">DAQmx</text>
      <circle cx="1406" cy="907" r="3" fill="#58d0c8" stroke="#111" />
      <circle cx="1414" cy="907" r="3" fill="#58d0c8" stroke="#111" />
      <path d="M1404 904l2-3M1414 904l2-3" stroke="#111" />
      <path d="M1396 919h3v-5h7v5h7v-5h7v5h5" stroke="#222" fill="none" />
      <path d="M1396 914l4-2 7 7 3 0 5-6 6 6 4-5" stroke="#d01818" strokeWidth="1.500" fill="none" />
    </svg>
  );
}

function ContextHelp() {
  return (
    <Palette title="Kontexthilfe" className="bottom-[61px] right-[318px] w-[394px]">
      <div className="mr-0.5 flex border-l-2 border-t-2 border-[#404040]">
        <div className="flex h-[153px] min-w-0 flex-1 flex-col bg-white pl-[7px] pt-[7px] leading-[13px]">
          <div className="w-[340px] text-center font-bold whitespace-nowrap">
            DAQmx - Lesen (Analog 1D Signalverlauf NKanäle NSamples)
            <br />
            [DAQmx Read (Analog 1D Wfm NChan NSamp).vi]
          </div>
          <div className="mt-[9px] flex">
            <div className="w-[130px] shrink-0 whitespace-nowrap text-right leading-[14px]">
              <b>Task/Kanäle (Eingang)</b>
              <br />
              Anzahl Samples pro Kanal
              <br />
              Fehler (Eingang)
            </div>
            <div className="ml-[3px] h-[42px] pt-px"><HelpDrawing /></div>
            <div className="whitespace-nowrap leading-[14px]">
              Task (Ausgang)
              <br />
              Daten
              <br />
              Fehler (Ausgang)
            </div>
          </div>
          <p className="mt-3 whitespace-nowrap">
            Liest einen oder mehrere Signalverläufe von einem Task, der einen
            <br />
            oder mehrere analoge Eingangskanäle enthält.
          </p>
          <p className="mt-2.5 w-[330px] text-center">
            <a href="#hilfe" className="font-bold text-[#0000d8] underline">Ausführliche Hilfe</a>
          </p>
        </div>
        <div className={`flex w-4 flex-col justify-between ${DITHER}`}>
          <ScrollButton dir="up" color="#808080" className="h-4" />
          <ScrollButton dir="down" color="#808080" className="h-4" />
        </div>
      </div>
      <div className="mb-px mr-0.5 flex h-[17px] border-l-2 border-[#404040]">
        {["Optionale Anschlüsse", "Sperren", "Hilfe"].map((l, i) => (
          <button key={l} aria-label={l} className="-mr-px flex h-[17px] w-[17px] items-center justify-center border border-black bg-[#d4d0c8]">
            <svg width="14" height="14" className="shrink-0" shapeRendering={i === 2 ? "auto" : "crispEdges"}>
              {i === 0 && <>
                <path d="M0 6h5M0 7h5" stroke="#2030d0" />
                <path d="M9 4.500h5M9 7.500h3M9 10.500h5" stroke="#d02020" />
                <path d="M6.500 2v10" stroke="#000" />
                <rect x="4.500" y="4.500" width="5" height="6" fill="#fff" stroke="#000" />
              </>}
              {i === 1 && <>
                <path d="M4.500 7V3.500q0-2 2-2t2 2" stroke="#000" fill="none" shapeRendering="auto" />
                <rect x="3.500" y="6.500" width="7" height="5" fill="#ddd" stroke="#000" />
                <path d="M4 9h6" stroke="#000" />
              </>}
              {i === 2 && <>
                <path d="M3.500 4.500Q3.500 2 7 2t3.500 2.500Q10.500 6 8.500 7 7 8 7 9.500" stroke="#1010d0" strokeWidth="2" fill="none" />
                <rect x="6" y="11" width="2" height="2" fill="#1010d0" />
              </>}
            </svg>
          </button>
        ))}
        <ScrollButton dir="left" color="#808080" className="w-[17px]" />
        <div className={`flex-1 ${DITHER}`} />
        <ScrollButton dir="right" color="#808080" className="w-4" />
        <svg width="17" height="17" className="border border-black">
          <path d="M16 3L3 16M16 7l-9 9M16 11l-5 5" stroke="#fff" />
          <path d="M16 4L4 16M16 8l-8 8M16 12l-4 4" stroke="#707070" strokeWidth="1.500" />
        </svg>
      </div>
    </Palette>
  );
}

/* ---------- task bar ---------- */

function FolderIcon() {
  return (
    <svg width="16" height="16" className="shrink-0">
      <path d="M1 3.500q0-1 1-1h4l2 2h6v9H1z" fill="#f4d868" stroke="#a88420" />
      <path d="M2 7h13l-1 7H1z" fill="#fdf0a0" stroke="#a88420" />
    </svg>
  );
}

function FirefoxIcon() {
  return (
    <svg width="16" height="16" viewBox="0 0 16 16" className="block shrink-0">
      <circle cx="8" cy="8" r="7.500" fill="#e06a10" />
      <circle cx="9" cy="6.500" r="5" fill="#2a5ab8" />
      <path d="M1 6q0 9 8 8 5-1 6-7-2 5-6 4-3-1-2-4-2-3-5-4z" fill="#f8a020" />
      <path d="M6 5l4-1-1 3-2 1z" fill="#f8c860" />
    </svg>
  );
}

function PaintIcon() {
  return (
    <svg width="16" height="16" className="shrink-0">
      <path d="M4 8L3 1M8 8L7 1M11 8l3-6" stroke="#c84828" strokeWidth="2" />
      <path d="M6 7l-1-5" stroke="#3878c8" strokeWidth="1.500" />
      <path d="M4 6h9l-1 9H5z" fill="#e4ecf4" stroke="#7888a0" />
      <path d="M6 10l3-2 2 4" stroke="#58a848" fill="none" strokeWidth="1.500" />
    </svg>
  );
}

const TASKS: [string, React.ReactNode][] = [
  ["Brennstoffzellenprüfstand", <FolderIcon />],
  ["Datenverarbeitung_Anal...", <ViIcon />],
  ["Datenverarbeitung_A...", <ViIcon />],
  ["Messen_Analog.vi Front...", <ViIcon />],
  ["Messen_Analog.vi Blockd...", <ViIcon />],
  ["Steuern_Analog.vi Front...", <ViIcon />],
  ["Steuern_Analog.vi Block...", <ViIcon />],
  ["LabVIEWforum.de - Das ...", <FirefoxIcon />],
  ["SubVI_Messen.bmp - Paint", <PaintIcon />],
];

const TRAY: React.ReactNode[] = [
  <><path d="M3 9l8-3 4 6-7 4z" fill="#9aa49a" stroke="#444" /><path d="M1 4l5-3 6 3-1 4-6 1z" fill="#38b838" stroke="#186018" /></>,
  <><rect x="1" y="1" width="14" height="14" fill="#c01818" /><path d="M4 12q4-4 4-9M8 7q2 3 5 2M5 11q3-2 7-2" stroke="#fff" fill="none" /></>,
  <><rect x="1" y="4" width="8" height="6" fill="#203070" stroke="#555" /><path d="M3 13h6M11 4q2 3 0 6M13 2q3 5 0 10" stroke="#444" fill="none" /></>,
  <><circle cx="8" cy="8" r="7" fill="#3080c0" /><path d="M3 6q3-2 5 0t5-1M3 11q3-2 5 0t5-1" stroke="#fff" strokeWidth="2" fill="none" /></>,
  <><path d="M3 2h10v4H3z" fill="#fff" stroke="#888" /><rect x="1" y="5" width="14" height="6" fill="#8088a8" stroke="#555" /><path d="M4 10h8v4H4z" fill="#fff" stroke="#888" /></>,
  <><circle cx="8" cy="8" r="7" fill="#e8f4ff" stroke="#2870c8" strokeWidth="1.500" /><path d="M9 2L4 9h3l-1 5 6-7H8z" fill="#2060c0" /></>,
  <><rect x="3" y="4" width="10" height="8" fill="#10d020" stroke="#000" /><path d="M5 14h6M8 12v2M1 1l2 3M15 1l-2 3M4 0l1 3M12 0l-1 3M2 15h12" stroke="#000" /></>,
  <><circle cx="4" cy="4" r="3" fill="#40a890" /><circle cx="10" cy="4" r="3" fill="#205080" /><path d="M1 14q3-8 8-7l4 7z" fill="#48b0a0" stroke="#234" /><circle cx="12" cy="12" r="4" fill="#e02020" /><path d="M10 10l4 4M14 10l-4 4" stroke="#fff" /></>,
  <><path d="M1 1h12v7q-2 5-6 7-5-2-6-7z" fill="#f4f8ff" stroke="#3870b8" strokeWidth="1.500" /><path d="M4 4h6M4 6h5" stroke="#3870b8" /><circle cx="10" cy="10" r="4.500" fill="#e02020" /><path d="M8 8l4 4M12 8l-4 4" stroke="#fff" strokeWidth="1.500" /></>,
  <><path d="M2 2l5 1 2 4 4-5-1 7-6 2z" fill="#1848b0" stroke="#112" /><path d="M1 13h13M4 10l9 5M12 13l3-2" stroke="#111" strokeWidth="1.500" /></>,
  <><path d="M1 9l6-1 5-5 2 1-4 5 4 2-1 1-5-1-3 4-1-1 1-4z" fill="#f0e840" stroke="#908820" /></>,
  <><circle cx="6" cy="7" r="5" fill="#888" stroke="#333" /><circle cx="6" cy="7" r="2" fill="#ddd" /><path d="M11 11q3-2 2-6M13 14q4-3 2-9" stroke="#88a" fill="none" /></>,
  <><path d="M0 8q6-7 16-4v9Q5 14 0 8z" fill="#78b820" /><path d="M3 8q4-4 8 0-4 4-8 0" stroke="#fff" fill="none" /><circle cx="7" cy="8" r="1.500" fill="#fff" /></>,
  <><rect x="1" y="1" width="14" height="14" fill="#fff" stroke="#e06020" strokeWidth="1.500" /><path d="M3 6V3l2 2 2-2v3M9 3v3M11 3v3" stroke="#2050c0" fill="none" /><path d="M3 9h9M3 12h9" stroke="#888" strokeDasharray="2 1" /></>,
];

function TaskBar() {
  return (
    <footer className="flex h-[52px] shrink-0 border-t border-white bg-[#d4d0c8] px-0.5 pt-0.5">
      <button className={`flex h-[22px] w-[52px] shrink-0 items-center gap-px pl-px text-[11px] font-bold ${RAISED}`}>
        <svg width="16" height="16" className="shrink-0">
          <path d="M3 3q2-2 5-.5L7 7.500Q4 6 2 7.500z" fill="#e85020" />
          <path d="M9 3q3 1.500 6 0l-1.500 5Q11 9 8 8z" fill="#58b030" />
          <path d="M2 9q2-2 5-.5l-1 5Q3 12 1 13.500z" fill="#3878e0" />
          <path d="M8 9q3 1.500 5.500 0l-1.500 5q-2.500 1-5 0z" fill="#f8c820" />
        </svg>
        Start
      </button>
      <nav aria-label="Schnellstart" className="flex h-6 shrink-0 items-center gap-[7px] pl-2">
        <button aria-label="Desktop anzeigen">
          <svg width="16" height="16" className="block"><rect x="2" y="2" width="12" height="12" rx="2" fill="#e8f4ff" stroke="#2878c0" strokeWidth="1.500" /><path d="M11 5q-6-1-6 3.500 0 3 5 2.500M6 8l8-6" stroke="#2068b0" strokeWidth="1.500" fill="none" /></svg>
        </button>
        <button aria-label="Internet Explorer">
          <svg width="16" height="16" className="block"><circle cx="8" cy="9" r="5" fill="none" stroke="#2888d8" strokeWidth="3" /><path d="M4 9h9" stroke="#2888d8" strokeWidth="2" /><path d="M1 13Q3 4 15 2" stroke="#58b0f0" strokeWidth="1.500" fill="none" /></svg>
        </button>
        <button aria-label="Firefox"><FirefoxIcon /></button>
        <button aria-label="VLC">
          <svg width="16" height="16" className="block"><path d="M7 1h2l4 11H3z" fill="#f48010" /><path d="M6 4h4l1 3H5z" fill="#f4f4f4" /><path d="M1 12h14v3H1z" fill="#f48010" stroke="#c06008" strokeWidth=".5" /></svg>
        </button>
      </nav>
      <div className="ml-[244px] grid grid-cols-[repeat(6,160px)] content-start gap-x-[3px] gap-y-[3px]">
        {TASKS.map(([t, icon], i) => (
          <button
            key={i}
            className={
              i === 2
                ? `flex h-[22px] items-center gap-[3px] overflow-hidden whitespace-nowrap border border-b-white border-l-[#404040] border-r-white border-t-[#404040] pl-1 pt-px font-bold ${DITHER}`
                : `flex h-[22px] items-center gap-[3px] overflow-hidden whitespace-nowrap pl-[3px] ${RAISED}`
            }
          >
            {icon}
            {t}
          </button>
        ))}
      </div>
      <div className="flex-1" />
      <div className="mr-[230px] flex items-center gap-1 pb-0.5">
        <span className="flex h-4 w-4 items-center justify-center bg-[#0a246a] text-white">DE</span>
        <span className="h-[26px] w-0.5 border-l border-[#808080] bg-white" />
      </div>
      <div className="flex h-[47px] w-[197px] items-center border border-b-white border-l-[#808080] border-r-white border-t-[#808080] pl-px">
        <div className="grid grid-cols-7 gap-x-0.5 gap-y-[3px]">
          {TRAY.map((art, i) => (
            <svg key={i} width="16" height="16">{art}</svg>
          ))}
        </div>
        <div className="flex-1 pr-0.5 text-center leading-[19px]">
          11:13
          <br />
          Montag
        </div>
      </div>
    </footer>
  );
}

export default function App() {
  return (
    <div className="relative flex h-screen min-h-[720px] flex-col overflow-hidden bg-[#d4d0c8] font-['DejaVu_Sans_Condensed','Noto_Sans',sans-serif] text-[11px] text-black">
      <TitleBar />
      <div className="flex h-[46px] shrink-0 border-b border-l-2 border-b-[#404040] border-l-[#808080]">
        <div className="flex min-w-0 flex-1 flex-col">
          <MenuBar />
          <Toolbar />
        </div>
        <div className="flex w-[37px] items-center justify-center border-l-2 border-black pr-0.5">
          <svg width="32" height="32" shapeRendering="crispEdges">
            <rect x="1" y="1" width="30" height="30" fill="#fff" stroke="#000" strokeWidth="2" />
            <path d="M8 7l17 9-17 9z" fill="#ffff30" stroke="#000" shapeRendering="auto" />
            <path d="M11 16h6M14 13v6" stroke="#000" />
          </svg>
        </div>
      </div>
      <div className="flex min-h-0 flex-1 border-l-2 border-r-2 border-[#808080]">
        <Canvas />
        <div className="flex w-4 flex-col">
          <ScrollButton dir="up" className="h-4" />
          <div className={`h-28 ${DITHER}`} />
          <div className={`flex-1 ${RAISED}`} />
          <ScrollButton dir="down" className="h-4" />
        </div>
      </div>
      <div className="flex h-4 shrink-0 border-l-2 border-[#808080] pr-[17px]">
        <div className="flex w-[96px] items-center justify-center whitespace-nowrap border border-black leading-[14px]">Studentenversion</div>
        <ScrollButton dir="left" color="#808080" className="w-4" />
        <div className={`flex-1 ${DITHER}`} />
        <ScrollButton dir="right" color="#808080" className="w-4" />
      </div>
      <div className="h-[3px] shrink-0 border-b border-[#b8b4ac]" />
      <TaskBar />
      <FunctionsPalette />
      <ContextHelp />
    </div>
  );
}
